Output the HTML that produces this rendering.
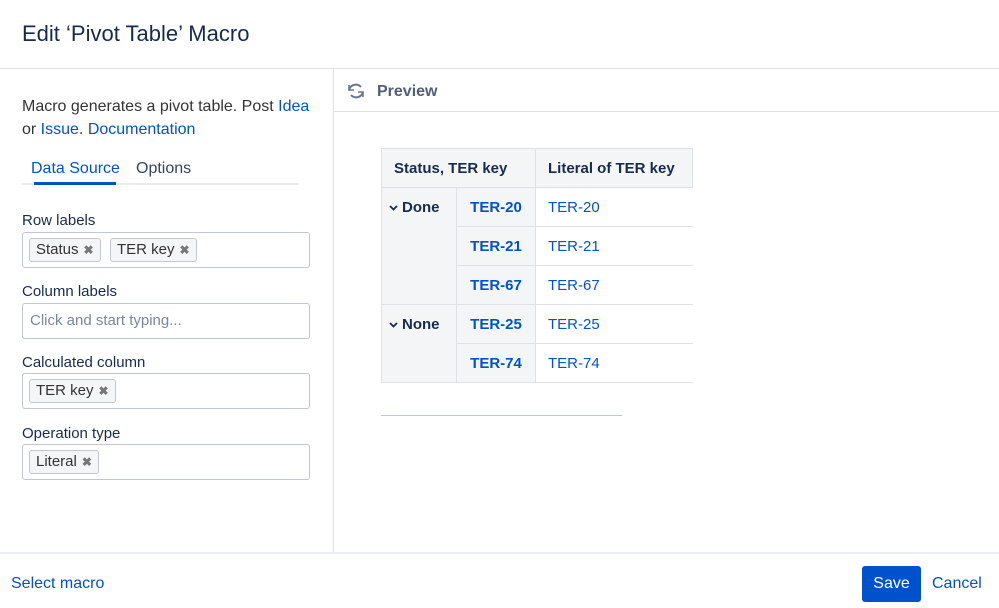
<!DOCTYPE html>
<html><head><style>
*{box-sizing:border-box;margin:0;padding:0}
body{width:999px;height:608px;background:#fff;font-family:"Liberation Sans",sans-serif;color:#172b4d;position:relative;overflow:hidden}
.a{position:absolute}
h1{position:absolute;left:22px;top:21px;font-size:22px;font-weight:normal;color:#172b4d}
.link{color:#0052cc}
.lbl{position:absolute;left:22px;font-size:15px;color:#172b4d}
.inp{position:absolute;left:22px;width:288px;height:36px;border:1px solid #c1c7d0;border-radius:3px;background:#fff}
.tag{position:absolute;top:5px;height:24px;border:1px solid #c1c7d0;background:#f4f5f7;border-radius:3px;font-size:15px;line-height:22px;padding:0 6px;color:#333}
.tag b{color:#777;font-size:12px;margin-left:5px}
table{position:absolute;left:381px;top:148px;border-collapse:collapse;font-size:15px}
td,th{height:39px;border:1px solid #dfe1e6;padding:0 12px;text-align:left;white-space:nowrap}
th{background:#f4f5f7;font-weight:bold}
.rl{background:#f4f5f7;font-weight:bold;vertical-align:top;padding-top:11px;padding-left:7px}
.rl svg{margin-right:4px;vertical-align:middle}
.k{background:#f4f5f7;font-weight:bold;color:#0052cc;text-align:center}
.v{color:#0052cc;border-right:none;width:157px}
</style></head><body>
<h1>Edit ‘Pivot Table’ Macro</h1>
<div class="a" style="left:0;top:68px;width:999px;height:1px;background:#dfe1e6"></div>
<div class="a" style="left:333px;top:68px;width:1px;height:484px;background:#dfe1e6"></div>
<div class="a" style="left:334px;top:111px;width:665px;height:1px;background:#dfe1e6"></div>
<div class="a" style="left:0;top:552px;width:999px;height:2px;background:#ebecf0"></div>
<div class="a" style="left:22px;top:95px;font-size:16px;line-height:23px;color:#333">Macro generates a pivot table. Post <span class="link">Idea</span><br>or <span class="link">Issue</span>. <span class="link">Documentation</span></div>
<div class="a" style="left:31px;top:160px;font-size:16px;color:#0052cc">Data Source</div>
<div class="a" style="left:136px;top:160px;font-size:16px;color:#344563">Options</div>
<div class="a" style="left:22px;top:183px;width:277px;height:2px;background:#ebecf0"></div>
<div class="a" style="left:34px;top:182px;width:82px;height:3px;background:#0052cc"></div>
<div class="lbl" style="top:212px">Row labels</div>
<div class="inp" style="top:232px"><div class="tag" style="left:6px">Status<b>✖</b></div><div class="tag" style="left:87px">TER key<b>✖</b></div></div>
<div class="lbl" style="top:283px">Column labels</div>
<div class="inp" style="top:303px"><div class="a" style="left:7px;top:8px;font-size:15px;color:#7a869a">Click and start typing...</div></div>
<div class="lbl" style="top:354px">Calculated column</div>
<div class="inp" style="top:373px"><div class="tag" style="left:6px">TER key<b>✖</b></div></div>
<div class="lbl" style="top:425px">Operation type</div>
<div class="inp" style="top:444px"><div class="tag" style="left:6px">Literal<b>✖</b></div></div>
<svg class="a" style="left:346px;top:81px" width="20" height="20" viewBox="0 0 20 20" fill="none" stroke="#6b778c" stroke-width="2"><path d="M15 6A7 7 0 0 0 3 9M5 14a7 7 0 0 0 12-3"/><path d="M3 4v5h5M17 16v-5h-5" stroke-width="1.6"/></svg>
<div class="a" style="left:377px;top:83px;font-size:16px;font-weight:bold;color:#505f79">Preview</div>
<table>
<tr><th colspan="2" style="width:154px">Status, TER key</th><th style="width:157px">Literal of TER key</th></tr>
<tr><td class="rl" rowspan="3" style="width:75px"><svg width="9" height="6" viewBox="0 0 9 6"><path d="M1 1l3.5 3.5L8 1" stroke="#172b4d" stroke-width="1.8" fill="none"/></svg>Done</td><td class="k" style="width:79px">TER-20</td><td class="v">TER-20</td></tr>
<tr><td class="k">TER-21</td><td class="v">TER-21</td></tr>
<tr><td class="k">TER-67</td><td class="v">TER-67</td></tr>
<tr><td class="rl" rowspan="2"><svg width="9" height="6" viewBox="0 0 9 6"><path d="M1 1l3.5 3.5L8 1" stroke="#172b4d" stroke-width="1.8" fill="none"/></svg>None</td><td class="k">TER-25</td><td class="v">TER-25</td></tr>
<tr><td class="k">TER-74</td><td class="v">TER-74</td></tr>
</table>
<div class="a" style="left:381px;top:415px;width:241px;height:1px;background:#c1c7d0"></div>
<div class="a" style="left:11px;top:575px;font-size:16px;color:#0052cc">Select macro</div>
<div class="a" style="left:862px;top:566px;width:59px;height:36px;background:#0052cc;border-radius:3px;color:#fff;font-size:16px;text-align:center;line-height:36px">Save</div>
<div class="a" style="left:932px;top:575px;font-size:16px;color:#0052cc">Cancel</div>
</body></html>
